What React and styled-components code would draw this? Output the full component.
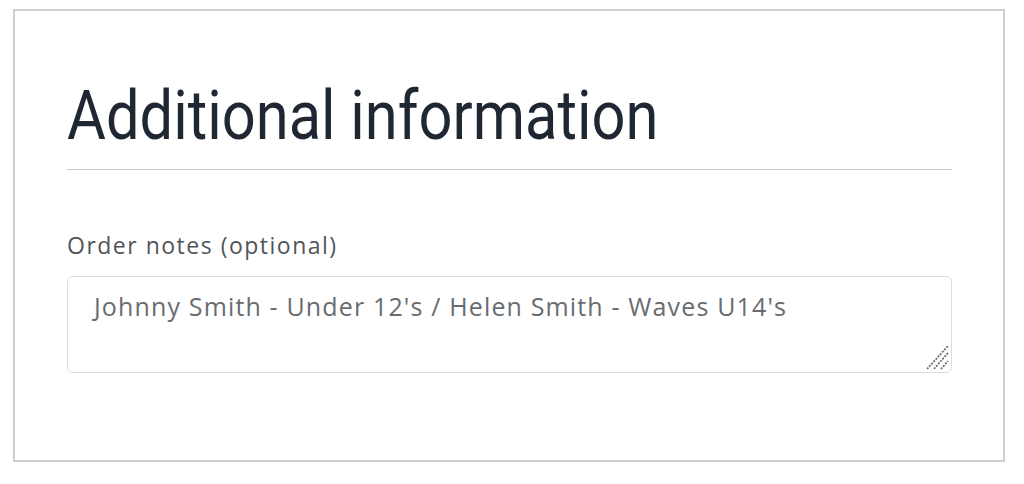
import React from "react";
import styled, { createGlobalStyle } from "styled-components";

const GlobalStyle = createGlobalStyle`
  html, body {
    margin: 0;
    padding: 0;
    background: #ffffff;
  }
  body {
    font-family: "Open Sans", "Liberation Sans", sans-serif;
  }
`;

const Page = styled.div`
  width: 1024px;
  height: 484px;
  box-sizing: border-box;
  padding: 9px 19px 0 13px;
`;

const Panel = styled.section`
  box-sizing: border-box;
  height: 453px;
  border: 2px solid #cfcfcf;
  padding: 70px 51px 0 52px;
`;

const Heading = styled.h3`
  margin: 0;
  font-family: "Roboto", sans-serif;
  font-weight: 400;
  font-size: 68px;
  line-height: 70px;
  color: #1f2733;
  padding-bottom: 18px;
  border-bottom: 1px solid #c9c9c9;
  white-space: nowrap;
`;

// the original uses a condensed face; squeeze Roboto to the same width
const Condensed = styled.span`
  display: inline-block;
  transform: scaleX(0.877);
  transform-origin: left center;
`;

const Field = styled.div`
  display: flex;
  flex-direction: column;
  gap: 16px;
  margin-top: 60px;
`;

const Label = styled.label`
  font-family: "Open Sans", sans-serif;
  font-weight: 400;
  font-size: 23px;
  line-height: 30px;
  letter-spacing: 1.5px;
  color: #50555b;
`;

const NotesWrap = styled.div`
  position: relative;
  height: 97px;
`;

const Notes = styled.textarea`
  box-sizing: border-box;
  width: 100%;
  height: 100%;
  padding: 12px 26px;
  border: 1px solid #dcdcdc;
  border-radius: 6px;
  font-family: "Open Sans", sans-serif;
  font-weight: 400;
  font-size: 25px;
  letter-spacing: 1.15px;
  color: #686c71;
  resize: none;
  outline: none;
  display: block;
`;

const Grip = styled.svg`
  position: absolute;
  right: 2px;
  bottom: 2px;
  pointer-events: none;
`;

const ResizeGrip = () => (
  <Grip width="26" height="28" viewBox="0 0 26 28">
    <g stroke="#6f6f6f" strokeWidth="1.8" strokeDasharray="2 1.2" strokeLinecap="butt">
      <line x1="3" y1="26" x2="24" y2="3" />
      <line x1="10" y1="26" x2="24" y2="10" />
      <line x1="17" y1="26" x2="24" y2="18" />
    </g>
  </Grip>
);

export default function App() {
  return (
    <Page>
      <GlobalStyle />
      <Panel>
        <Heading>
          <Condensed>Additional information</Condensed>
        </Heading>
        <Field>
          <Label htmlFor="order-notes">Order notes (optional)</Label>
          <NotesWrap>
            <Notes
              id="order-notes"
              defaultValue="Johnny Smith - Under 12's / Helen Smith - Waves U14's"
            />
            <ResizeGrip />
          </NotesWrap>
        </Field>
      </Panel>
    </Page>
  );
}
